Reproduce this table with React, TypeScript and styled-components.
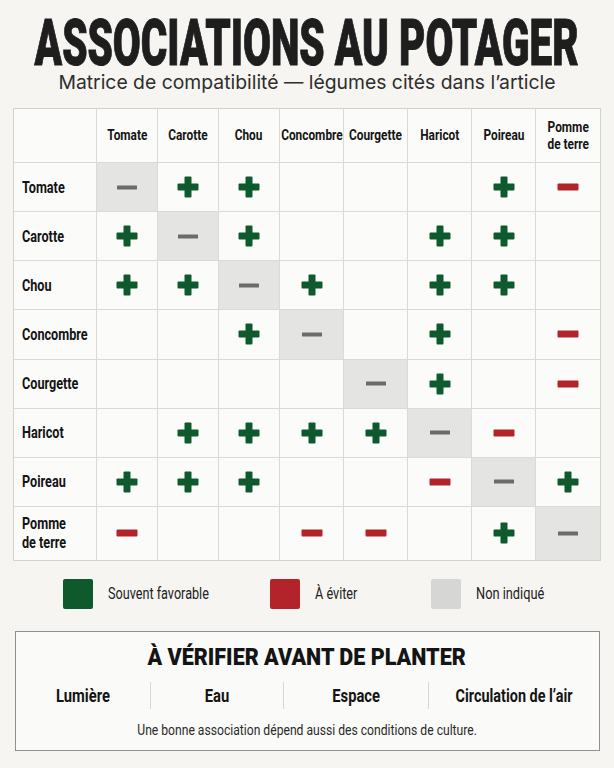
import React from "react";
import styled, { createGlobalStyle } from "styled-components";

const SANS = `Roboto, "Liberation Sans", sans-serif`;

const GlobalStyle = createGlobalStyle`
  html, body { margin: 0; padding: 0; background: #f6f5f1; }
  body { font-family: ${SANS}; color: #1b1b1b; }
  * { box-sizing: border-box; }
`;

const Page = styled.div`
  width: 614px;
  height: 768px;
  overflow: hidden;
  padding-top: 14px;
  display: flex;
  flex-direction: column;
  align-items: center;
`;

/* condensed text: Roboto squeezed horizontally */
const Squeeze = styled.span<{ $x?: number; $origin?: string }>`
  display: inline-block;
  white-space: nowrap;
  transform: scaleX(${(p) => p.$x ?? 0.78});
  transform-origin: ${(p) => p.$origin ?? "center"};
`;

const Title = styled.h1`
  margin: 0;
  font-family: ${SANS};
  font-weight: 900;
  font-size: 64.7px;
  line-height: 58px;
  color: #1e1e1e;
  white-space: nowrap;
  transform: scaleX(0.626);
  -webkit-text-stroke: 1px #1e1e1e;
`;

const Subtitle = styled.p`
  margin: 0;
  font-family: Inter, Roboto, sans-serif;
  font-size: 19.35px;
  line-height: 20px;
  color: #2e2e2e;
  white-space: nowrap;
`;

const Matrix = styled.div`
  margin-top: 16px;
  width: 588px;
  display: grid;
  grid-template-columns: 82px repeat(3, 60px) repeat(4, 63px) 64px;
  grid-template-rows: 53px repeat(7, 48.15px) 53px;
  gap: 1px;
  background: #dadad7;
  border: 1px solid #d2d2cf;
`;

const Cell = styled.div<{ $diag?: boolean }>`
  background: ${(p) => (p.$diag ? "#e4e4e2" : "#fbfbf9")};
  display: flex;
  align-items: center;
  justify-content: center;
`;

const ColHead = styled(Cell)`
  font-weight: 700;
  font-size: 15px;
  line-height: 17px;
  text-align: center;
  color: #141414;
`;

const RowHead = styled(Cell)`
  justify-content: flex-start;
  padding-left: 8px;
  font-weight: 700;
  font-size: 16px;
  line-height: 19px;
  color: #141414;
`;

const GREEN = "#0e5a2d";
const RED = "#b3242a";

const Plus = () => (
  <svg width="22" height="22" viewBox="0 0 22 22">
    <rect x="7.5" y="0.5" width="7" height="21" rx="1" fill={GREEN} />
    <rect x="0.5" y="7.5" width="21" height="7" rx="1" fill={GREEN} />
  </svg>
);

const Minus = () => (
  <svg width="22" height="8" viewBox="0 0 22 8">
    <rect x="0.5" y="0.5" width="21" height="7" rx="1" fill={RED} />
  </svg>
);

const Dash = () => (
  <svg width="20" height="5" viewBox="0 0 20 5">
    <rect x="0" y="0.5" width="20" height="4" rx="0.5" fill="#6b6b6b" />
  </svg>
);

const Legend = styled.div`
  margin-top: 18px;
  align-self: stretch;
  padding-left: 63px;
  display: grid;
  grid-template-columns: 207px 161px auto;
  align-items: center;
  height: 30px;
`;

const LegendItem = styled.div`
  display: flex;
  align-items: center;
  gap: 15px;
`;

const Swatch = styled.span<{ $color: string }>`
  flex: none;
  width: 30px;
  height: 30px;
  border-radius: 2px;
  background: ${(p) => p.$color};
`;

const LegendText = styled.span`
  font-size: 16px;
  color: #222;
`;

const CheckBox = styled.section`
  margin-top: 22px;
  width: 585px;
  border: 1.5px solid #8f8f8f;
  background: #fafaf8;
  padding: 11px 0 11px;
  display: flex;
  flex-direction: column;
  align-items: center;
`;

const CheckTitle = styled.h2`
  margin: 0;
  font-weight: 900;
  font-size: 23.5px;
  line-height: 28px;
  color: #141414;
`;

const CheckRow = styled.div`
  margin-top: 11px;
  width: 100%;
  display: grid;
  grid-template-columns: 135fr 133fr 146fr 171fr;
  height: 27px;
`;

const CheckItem = styled.div<{ $first?: boolean }>`
  display: flex;
  align-items: center;
  justify-content: center;
  border-left: ${(p) => (p.$first ? "none" : "1px solid #d6d6d3")};
  font-weight: 700;
  font-size: 18px;
  color: #141414;
`;

const Note = styled.p`
  margin: 12px 0 0;
  font-size: 14.8px;
  line-height: 18px;
  color: #2a2a2a;
`;

type Mark = "+" | "-" | "" | "d";

const names = ["Tomate", "Carotte", "Chou", "Concombre", "Courgette", "Haricot", "Poireau", "Pomme de terre"];

const data: Mark[][] = [
  ["d", "+", "+", "", "", "", "+", "-"],
  ["+", "d", "+", "", "", "+", "+", ""],
  ["+", "+", "d", "+", "", "+", "+", ""],
  ["", "", "+", "d", "", "+", "", "-"],
  ["", "", "", "", "d", "+", "", "-"],
  ["", "+", "+", "+", "+", "d", "-", ""],
  ["+", "+", "+", "", "", "-", "d", "+"],
  ["-", "", "", "-", "-", "", "+", "d"],
];

const Label = ({ text, origin }: { text: string; origin: string }) => (
  <Squeeze $x={0.79} $origin={origin}>
    {text === "Pomme de terre" ? (
      <>
        Pomme
        <br />
        de terre
      </>
    ) : (
      text
    )}
  </Squeeze>
);

const renderMark = (m: Mark) => {
  if (m === "+") return <Plus />;
  if (m === "-") return <Minus />;
  if (m === "d") return <Dash />;
  return null;
};

export default function App() {
  return (
    <>
      <GlobalStyle />
      <Page>
        <Title>ASSOCIATIONS AU POTAGER</Title>
        <Subtitle>Matrice de compatibilité — légumes cités dans l’article</Subtitle>
        <Matrix>
          <ColHead />
          {names.map((n) => (
            <ColHead key={n}>
              <Label text={n} origin="center" />
            </ColHead>
          ))}
          {data.map((row, r) => (
            <React.Fragment key={names[r]}>
              <RowHead>
                <Label text={names[r]} origin="left" />
              </RowHead>
              {row.map((m, c) => (
                <Cell key={c} $diag={m === "d"}>
                  {renderMark(m)}
                </Cell>
              ))}
            </React.Fragment>
          ))}
        </Matrix>
        <Legend>
          <LegendItem>
            <Swatch $color={GREEN} />
            <LegendText>
              <Squeeze $x={0.79} $origin="left">Souvent favorable</Squeeze>
            </LegendText>
          </LegendItem>
          <LegendItem>
            <Swatch $color={RED} />
            <LegendText>
              <Squeeze $x={0.79} $origin="left">À éviter</Squeeze>
            </LegendText>
          </LegendItem>
          <LegendItem>
            <Swatch $color="#d6d6d5" />
            <LegendText>
              <Squeeze $x={0.8} $origin="left">Non indiqué</Squeeze>
            </LegendText>
          </LegendItem>
        </Legend>
        <CheckBox>
          <CheckTitle>
            <Squeeze $x={0.917}>À VÉRIFIER AVANT DE PLANTER</Squeeze>
          </CheckTitle>
          <CheckRow>
            <CheckItem $first>
              <Squeeze $x={0.82}>Lumière</Squeeze>
            </CheckItem>
            <CheckItem>
              <Squeeze $x={0.82}>Eau</Squeeze>
            </CheckItem>
            <CheckItem>
              <Squeeze $x={0.82}>Espace</Squeeze>
            </CheckItem>
            <CheckItem>
              <Squeeze $x={0.8}>Circulation de l’air</Squeeze>
            </CheckItem>
          </CheckRow>
          <Note>
            <Squeeze $x={0.82}>Une bonne association dépend aussi des conditions de culture.</Squeeze>
          </Note>
        </CheckBox>
      </Page>
    </>
  );
}
